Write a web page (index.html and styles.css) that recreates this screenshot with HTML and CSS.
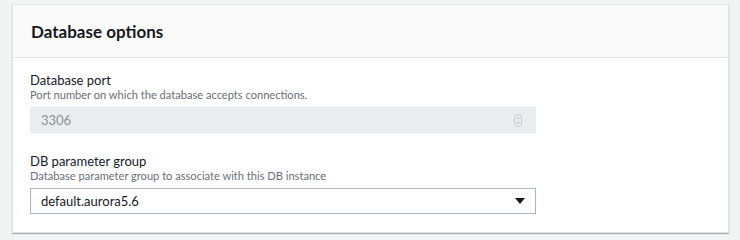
FILE: index.html
```html
<!DOCTYPE html>
<html lang="en">
<head>
    <meta charset="UTF-8">
    <title>Database options</title>
    <link rel="stylesheet" href="styles.css">
</head>
<body>
    <section class="panel">
        <header class="panel-header">
            <h2>Database options</h2>
        </header>
        <div class="panel-body">
            <div class="field">
                <label class="field-label">Database port</label>
                <p class="field-desc">Port number on which the database accepts connections.</p>
                <div class="input disabled">
                    <span>3306</span>
                    <span class="spinner">
                        <svg width="8" height="13" viewBox="0 0 8 13">
                            <rect x="0.5" y="0.5" width="7" height="12" rx="3.5" fill="none" stroke="#c4cbcc"/>
                            <path d="M2.5 5 L4 3.5 L5.5 5 M2.5 8 L4 9.5 L5.5 8" fill="none" stroke="#9aa4a5" stroke-width="0.8"/>
                        </svg>
                    </span>
                </div>
            </div>
            <div class="field">
                <label class="field-label">DB parameter group</label>
                <p class="field-desc">Database parameter group to associate with this DB instance</p>
                <div class="input select">
                    <span>default.aurora5.6</span>
                    <span class="caret"></span>
                </div>
            </div>
        </div>
    </section>
</body>
</html>
```

FILE: styles.css
```css
body {
    margin: 0;
    padding: 4px 11px 8px 12px;
    background-color: #f2f3f3;
    font-family: Lato, "Open Sans", Arial, sans-serif;
    color: #16191f;
}

.panel {
    background-color: #fff;
    border: 1px solid #e1e4e4;
    box-shadow: 0 1px 1px rgba(0, 28, 36, 0.3);
}

.panel-header {
    background-color: #fafafa;
    border-bottom: 1px solid #e1e4e4;
    height: 52px;
    display: flex;
    align-items: center;
    padding: 0 18px;
}

.panel-header h2 {
    margin: 0;
    font-size: 17px;
    font-weight: bold;
    color: #16191f;
}

.panel-body {
    padding: 14px 192px 18px 17px;
}

.field {
    margin-bottom: 20px;
}

.field:last-child {
    margin-bottom: 0;
}

.field-label {
    display: block;
    font-size: 13px;
    line-height: 16px;
    color: #16191f;
}

.field-desc {
    margin: 0 0 5px;
    font-size: 11.1px;
    line-height: 14px;
    color: #687078;
}

.input {
    height: 26px;
    box-sizing: border-box;
    display: flex;
    align-items: center;
    justify-content: space-between;
    padding: 0 14px 0 11px;
    font-size: 13px;
}

.input.disabled {
    background-color: #eaeded;
    color: #879596;
}

.input.select {
    border: 1px solid #aab7b8;
    color: #16191f;
    padding: 0 10px 0 10px;
}

.spinner {
    display: flex;
}

.caret {
    width: 0;
    height: 0;
    border-left: 5px solid transparent;
    border-right: 5px solid transparent;
    border-top: 6px solid #16191f;
}
```
